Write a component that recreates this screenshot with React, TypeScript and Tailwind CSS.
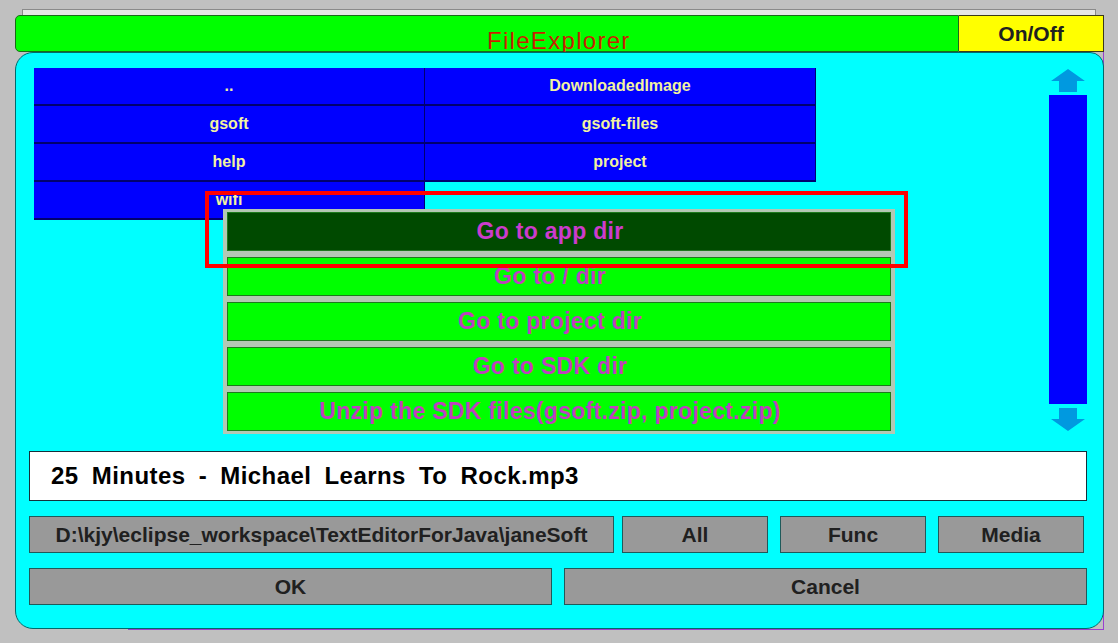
import React from "react";

const files = ["..", "DownloadedImage", "gsoft", "gsoft-files", "help", "project", "wifi"];

const menu = [
  "Go to app dir",
  "Go to / dir",
  "Go to project dir",
  "Go to SDK dir",
  "Unzip the SDK files(gsoft.zip, project.zip)",
];

function Arrow({ down }: { down?: boolean }) {
  return (
    <svg width="38" height="25" viewBox="0 0 38 25" className={down ? "rotate-180" : ""}>
      <path d="M19 1 L36 13 L28 13 L28 24 L10 24 L10 13 L2 13 Z" fill="#0099e0" />
    </svg>
  );
}

function GrayButton({ label, className }: { label: string; className: string }) {
  return (
    <div
      className={`h-[37px] bg-[#999999] border border-[#1f5a5a] flex items-center justify-center text-[21px] font-bold text-[#202020] ${className}`}
    >
      {label}
    </div>
  );
}

export default function App() {
  return (
    <div
      className="relative w-[1118px] h-[643px] bg-[#c0c0c0] overflow-hidden pt-[15px] pl-[15px]"
      style={{ fontFamily: '"Liberation Sans", Arial, sans-serif' }}
    >
      {/* windows behind */}
      <div className="absolute top-[9px] left-[22px] w-[1074px] h-[8px] bg-[#e6e6e6] border-t border-l border-r border-[#8a8a8a]" />
      <div className="absolute top-[52px] left-[128px] w-[976px] h-[578px] border-r border-b border-[#9a40d0]" />

      {/* title bar */}
      <div className="relative flex w-[1089px] h-[37px]">
        <div className="flex-1 bg-[#00ff00] border border-[#1a6a1a] rounded-l-[5px] relative">
          <span className="absolute left-[471px] top-[11px] text-[24px] leading-[28px] text-[#c81e00] tracking-[1.3px]">
            FileExplorer
          </span>
        </div>
        <div className="w-[145px] bg-[#ffff00] border border-l-0 border-[#3a3a1a] flex items-center justify-center text-[21px] font-bold text-[#202020]">
          On/Off
        </div>
      </div>

      {/* main panel */}
      <div className="relative w-[1089px] h-[577px] bg-[#00ffff] border border-[#006a6a] rounded-[18px] rounded-tr-[14px] pl-[13px] pr-[16px] pt-[15px] flex flex-col">
        <div className="flex h-[364px]">
          <div className="ml-[5px] w-[782px] grid grid-cols-2 auto-rows-[38px] content-start">
            {files.map((f) => (
              <div
                key={f}
                className="bg-[#0000ff] border-[#000070] border-b-2 border-r flex items-center justify-center text-[16px] font-bold text-[#f2f2a0]"
              >
                {f}
              </div>
            ))}
          </div>
          <div className="ml-auto w-[38px] flex flex-col items-center">
            <Arrow />
            <div className="mt-[2px] w-[38px] h-[310px] bg-[#0000ff]" />
            <div className="mt-[3px]">
              <Arrow down />
            </div>
          </div>
        </div>

        <div className="mt-[19px] h-[50px] bg-white border border-[#14303a] flex items-center pl-[21px] text-[24px] font-bold text-black [word-spacing:6px] tracking-[0.45px]">
          25 Minutes - Michael Learns To Rock.mp3
        </div>

        <div className="mt-[15px] flex">
          <GrayButton label={"D:\\kjy\\eclipse_workspace\\TextEditorForJava\\janeSoft"} className="w-[585px]" />
          <GrayButton label="All" className="w-[146px] ml-[8px]" />
          <GrayButton label="Func" className="w-[146px] ml-[12px]" />
          <GrayButton label="Media" className="w-[146px] ml-[12px]" />
        </div>

        <div className="mt-[15px] flex">
          <GrayButton label="OK" className="w-[523px]" />
          <GrayButton label="Cancel" className="w-[523px] ml-[12px]" />
        </div>

        {/* popup menu */}
        <div className="absolute left-[207px] top-[156px] w-[672px] h-[225px] bg-[#b4c8b4] px-[4px] pt-[3px] flex flex-col gap-[6px]">
          {menu.map((m, i) => (
            <div
              key={m}
              className={`h-[39px] border border-[#1d7a1d] flex items-center justify-center pr-[18px] text-[23px] tracking-[0.3px] font-bold ${
                i === 0 ? "bg-[#004a00] text-[#cc3ccc]" : "bg-[#00ff00] text-[#bf40bf]"
              }`}
            >
              {m}
            </div>
          ))}
        </div>

        {/* selection highlight */}
        <div className="absolute left-[189px] top-[138px] w-[703px] h-[77px] border-[4px] border-[#ff0000]" />
      </div>
    </div>
  );
}
